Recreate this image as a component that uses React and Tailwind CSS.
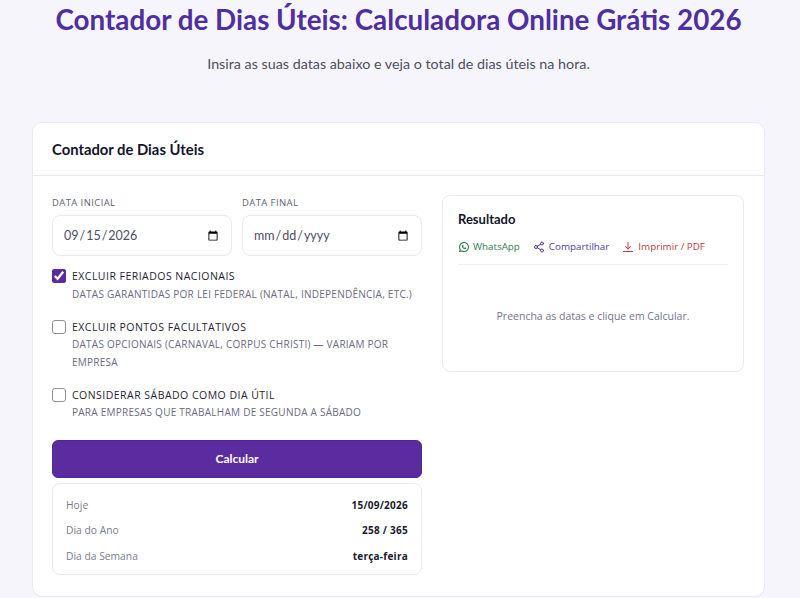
import React from "react";

function Wa() {
  return (
    <svg width="12" height="12" viewBox="0 0 24 24" fill="none" stroke="currentColor" strokeWidth="2.2" strokeLinecap="round" strokeLinejoin="round">
      <path d="M3 21l1.65-3.8a9 9 0 1 1 3.4 2.9L3 21" />
      <path d="M9 10a.5.5 0 0 0 1 0V9a.5.5 0 0 0-1 0v1a5 5 0 0 0 5 5h1a.5.5 0 0 0 0-1h-1a.5.5 0 0 0 0 1" />
    </svg>
  );
}
function Share() {
  return (
    <svg width="12" height="12" viewBox="0 0 24 24" fill="none" stroke="currentColor" strokeWidth="2" strokeLinecap="round" strokeLinejoin="round">
      <circle cx="18" cy="5" r="3" />
      <circle cx="6" cy="12" r="3" />
      <circle cx="18" cy="19" r="3" />
      <path d="M8.6 13.5l6.8 4M15.4 6.5l-6.8 4" />
    </svg>
  );
}
function Dl() {
  return (
    <svg width="12" height="12" viewBox="0 0 24 24" fill="none" stroke="currentColor" strokeWidth="2" strokeLinecap="round" strokeLinejoin="round">
      <path d="M3 21h18" />
      <path d="M12 3v13" />
      <path d="M7 11l5 5 5-5" />
    </svg>
  );
}

function Check({ checked, title, desc }) {
  return (
    <label className="flex gap-[6px] items-start">
      <input
        type="checkbox"
        defaultChecked={checked}
        className={checked
          ? "w-[14px] h-[14px] shrink-0 accent-[#5b2c9f]"
          : "w-[14px] h-[14px] shrink-0 appearance-none bg-white border border-[#8f8f98] rounded-[3px]"}
      />
      <span className="block">
        <span className="block text-[10.5px] leading-[15px] tracking-[0.47px] text-[#1f2233]">{title}</span>
        <span className="block text-[10px] leading-[17.5px] mt-[1.5px] tracking-[0.25px] text-[#6b6b80]">{desc}</span>
      </span>
    </label>
  );
}

function Stat({ k, v }) {
  return (
    <div className="flex justify-between items-center h-[25.5px]">
      <span className="text-[10.3px] text-[#7b7b8c]">{k}</span>
      <span className="text-[10px] font-bold tracking-[0.25px] text-[#1a1a2e]">{v}</span>
    </div>
  );
}

export default function App() {
  return (
    <div className="h-[598px] overflow-hidden bg-[#f7f5fc] font-['Open_Sans',sans-serif]">
      <div className="w-[797px]">
        <h1 className="text-center text-[27.8px] leading-[40px] font-bold text-[#4f2f9f] font-['Lato',sans-serif] whitespace-nowrap">
          Contador de Dias Úteis: Calculadora Online Grátis 2026
        </h1>
        <p className="text-center text-[14.3px] leading-[20px] text-[#4e4e62] mt-[14px] font-['Lato',sans-serif]">
          Insira as suas datas abaixo e veja o total de dias úteis na hora.
        </p>
      </div>
      <div className="mt-[48px] ml-[32px] w-[733px] bg-white border border-[#ebe8f2] rounded-[10px] h-[475px]">
        <div className="h-[53px] border-b border-[#ebe8f2] flex items-center px-[19px]">
          <h2 className="text-[14.8px] font-bold text-[#14142a] font-['Lato',sans-serif]">Contador de Dias Úteis</h2>
        </div>
        <div className="flex gap-[20px] px-[19px] pt-[19px]">
          <div className="w-[370px]">
            <div className="grid grid-cols-2 gap-[10px]">
              {[["DATA INICIAL", "2026-09-15"], ["DATA FINAL", ""]].map(([l, v]) => (
                <div key={l}>
                  <label className="block text-[9.5px] leading-[14px] tracking-[0.4px] text-[#5f5f72] mt-[1px] mb-[5px]">{l}</label>
                  <input
                    type="date"
                    defaultValue={v}
                    className="w-full h-[41px] border border-[#ebe8f2] rounded-[8px] px-[10px] pt-[2px] text-[12.5px] text-[#4e4e62] bg-white font-['Lato',sans-serif]"
                  />
                </div>
              ))}
            </div>
            <div className="flex flex-col gap-[16.5px] mt-[13px]">
              <Check checked title="EXCLUIR FERIADOS NACIONAIS" desc="DATAS GARANTIDAS POR LEI FEDERAL (NATAL, INDEPENDÊNCIA, ETC.)" />
              <Check title="EXCLUIR PONTOS FACULTATIVOS" desc="DATAS OPCIONAIS (CARNAVAL, CORPUS CHRISTI) — VARIAM POR EMPRESA" />
              <Check title="CONSIDERAR SÁBADO COMO DIA ÚTIL" desc="PARA EMPRESAS QUE TRABALHAM DE SEGUNDA A SÁBADO" />
            </div>
            <button className="w-full h-[38px] mt-[18px] rounded-[6px] bg-[#5b2c9f] border border-[#4f2a8e] text-white text-[12px] font-bold font-['Lato',sans-serif]">
              Calcular
            </button>
            <div className="mt-[5px] h-[92px] border border-[#ebe8f2] rounded-[8px] px-[13px] pt-[9px]">
              <Stat k="Hoje" v="15/09/2026" />
              <Stat k="Dia do Ano" v="258 / 365" />
              <Stat k="Dia da Semana" v="terça-feira" />
            </div>
          </div>
          <div className="w-[302px] h-[177px] border border-[#ebe8f2] rounded-[8px] px-[15px] pt-[14px]">
            <h3 className="text-[13px] leading-[18px] font-bold text-[#14142a] font-['Lato',sans-serif]">Resultado</h3>
            <div className="flex gap-[13px] mt-[11px] pb-[9px] border-b border-[#efedf4] text-[9.8px] leading-[16px]">
              <span className="flex items-center gap-[3px] text-[#2f7d4f]"><Wa />WhatsApp</span>
              <span className="flex items-center gap-[4px] text-[#4f3a9f]"><Share />Compartilhar</span>
              <span className="flex items-center gap-[4px] text-[#c0393f]"><Dl />Imprimir / PDF</span>
            </div>
            <p className="text-center text-[10.5px] text-[#74748a] mt-[44px]">Preencha as datas e clique em Calcular.</p>
          </div>
        </div>
      </div>
    </div>
  );
}
